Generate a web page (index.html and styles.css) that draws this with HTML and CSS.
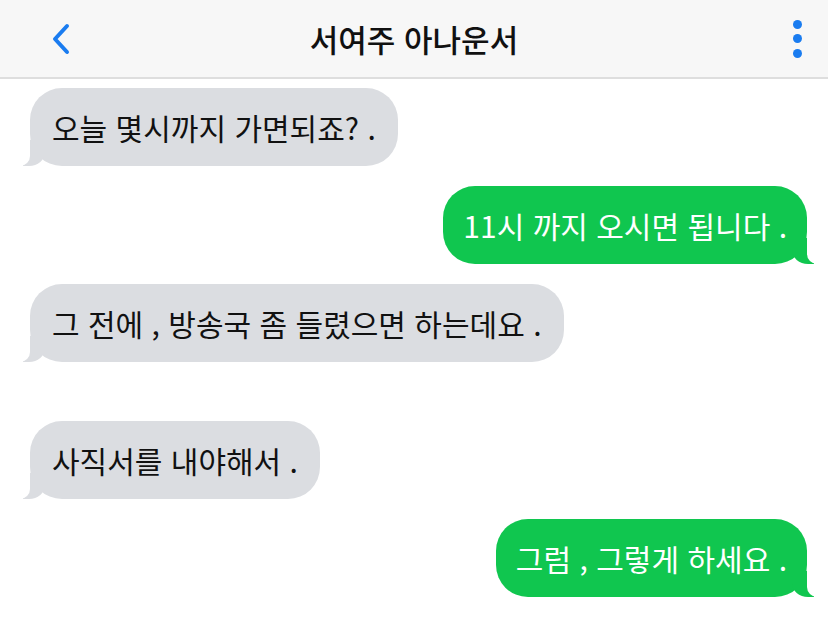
FILE: index.html
```html
<!DOCTYPE html>
<html lang="ko">
  <head>
    <meta charset="UTF-8" />
    <meta name="viewport" content="width=device-width, initial-scale=1.0" />
    <title>서여주 아나운서</title>
    <link rel="stylesheet" href="styles.css">
  </head>
  <body>
    <header class="topbar">
      <a class="back" href="#">
        <svg width="20" height="32" viewBox="0 0 20 32">
          <path d="M16 3 L4 16 L16 29" fill="none" stroke="#1a7cf0" stroke-width="4" stroke-linecap="round" stroke-linejoin="round" />
        </svg>
      </a>
      <h1 class="title">서여주 아나운서</h1>
      <div class="more">
        <span class="dot"></span>
        <span class="dot"></span>
        <span class="dot"></span>
      </div>
    </header>
    <main class="chat">
      <div class="msg them">오늘 몇시까지 가면되죠? .</div>
      <div class="msg me">11시 까지 오시면 됩니다 .</div>
      <div class="msg them">그 전에 , 방송국 좀 들렸으면 하는데요 .</div>
      <div class="msg them gap">사직서를 내야해서 .</div>
      <div class="msg me">그럼 , 그렇게 하세요 .</div>
    </main>
  </body>
</html>
```

FILE: styles.css
```css
body {
  margin: 0;
  background-color: white;
  font-family: "Noto Sans CJK KR", "Noto Sans", sans-serif;
}
.topbar {
  height: 77px;
  background-color: #f7f7f7;
  border-bottom: 2px solid #dedede;
  display: grid;
  grid-template-columns: 1fr auto 1fr;
  align-items: center;
  padding: 0 22px;
}
.back {
  display: flex;
  width: 20px;
  height: 32px;
  margin-left: 29px;
}
.title {
  margin: 0;
  font-size: 31px;
  font-weight: 500;
  color: #111;
}
.more {
  justify-self: end;
  display: flex;
  flex-direction: column;
  gap: 5.5px;
  width: 18px;
  align-items: center;
}
.dot {
  width: 9px;
  height: 9px;
  border-radius: 50%;
  background-color: #1a7cf0;
}
.chat {
  display: flex;
  flex-direction: column;
  padding: 9px 21px 0 30px;
}
.msg {
  position: relative;
  height: 78px;
  line-height: 78px;
  padding: 0 22px;
  border-radius: 32px;
  font-size: 30px;
  margin-top: 20px;
  white-space: nowrap;
}
.msg:first-child {
  margin-top: 0;
}
.msg.gap {
  margin-top: 59px;
}
.msg::before,
.msg::after {
  content: "";
  position: absolute;
  bottom: 0;
  height: 26px;
}
.them {
  align-self: flex-start;
  background-color: #dbdde1;
  color: #111;
}
.them::before {
  left: -7px;
  width: 22px;
  background-color: #dbdde1;
  border-bottom-right-radius: 16px 14px;
}
.them::after {
  left: -26px;
  width: 26px;
  background-color: white;
  border-bottom-right-radius: 10px;
}
.me {
  align-self: flex-end;
  background-color: #10c64f;
  color: white;
  padding: 0 20px;
}
.me::before {
  right: -7px;
  width: 22px;
  background-color: #10c64f;
  border-bottom-left-radius: 16px 14px;
}
.me::after {
  right: -26px;
  width: 26px;
  background-color: white;
  border-bottom-left-radius: 10px;
}
```
